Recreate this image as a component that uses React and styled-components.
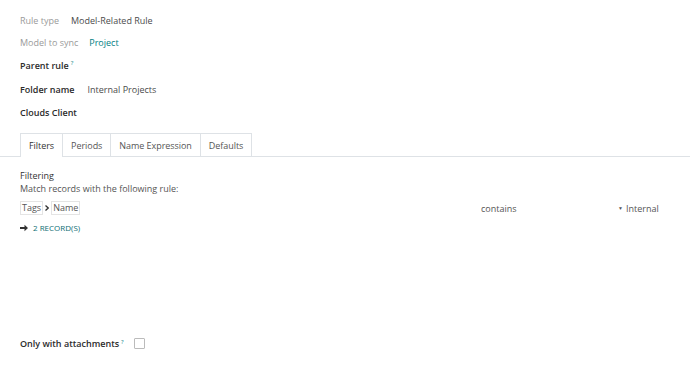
import React from "react";
import styled, { createGlobalStyle } from "styled-components";

const Global = createGlobalStyle`
  body {
    margin: 0;
    background: #fff;
    font-family: "Open Sans", "Noto Sans", sans-serif;
    font-size: 9px;
    color: #374151;
  }
`;

const Page = styled.div`
  width: 690px;
  height: 381px;
  display: flex;
  flex-direction: column;
  padding-top: 9px;
  box-sizing: border-box;
`;

const Fields = styled.div`
  display: flex;
  flex-direction: column;
  padding-left: 20px;
`;

const Row = styled.div`
  display: flex;
  align-items: center;
  height: ${p => p.$h || 23}px;
`;

const Label = styled.span`
  color: ${p => (p.$muted ? "#9a9a9a" : "#2b2b2b")};
  font-weight: ${p => (p.$muted ? 400 : 600)};
  margin-right: ${p => p.$gap || 0}px;
`;

const Value = styled.span`
  color: ${p => (p.$link ? "#017e84" : "#4b4b4b")};
`;

const Help = styled.sup`
  color: #017e84;
  font-size: 6px;
  font-weight: 400;
  margin-left: 2px;
  position: relative;
  top: -2px;
`;

const TabBar = styled.div`
  display: flex;
  margin-top: 9px;
  padding-left: 20px;
  border-bottom: 1px solid #dee2e6;
`;

const Tab = styled.div`
  display: flex;
  align-items: center;
  padding: 0 8px;
  border: 1px solid #dee2e6;
  border-bottom: none;
  margin-right: -1px;
  background: #fff;
  margin-bottom: ${p => (p.$active ? "-1px" : "0")};
  height: ${p => (p.$active ? "23px" : "22px")};
  color: ${p => (p.$active ? "#333" : "#555")};
  letter-spacing: -0.05px;
`;

const Panel = styled.div`
  padding: 12px 20px 0;
  display: flex;
  flex-direction: column;
  flex: 1;
`;

const Title = styled.div`
  color: #333;
  line-height: 14px;
`;

const Sub = styled.div`
  color: #555;
  line-height: 12px;
`;

const RuleRow = styled.div`
  display: grid;
  grid-template-columns: 461px 130px 1fr;
  align-items: center;
  margin-top: 6px;
  height: 14px;
  color: #555;
`;

const Path = styled.div`
  display: flex;
  align-items: center;
`;

const Chip = styled.span`
  border: 1px solid #e4e4e4;
  padding: 0 1px;
  line-height: 12px;
`;

const Caret = styled.svg`
  margin: 0 2px;
`;

const ValueCell = styled.div`
  display: flex;
  align-items: center;
  gap: 3px;
  margin-left: 7px;
`;

const Records = styled.div`
  display: flex;
  align-items: center;
  gap: 5px;
  margin-top: 7px;
  color: #0e6e73;
  font-size: 8px;
`;

const Bottom = styled.div`
  display: flex;
  align-items: center;
  padding: 0 20px 31px;
  font-weight: 600;
  color: #2b2b2b;
`;

const Box = styled.span`
  width: 9px;
  height: 9px;
  border: 1px solid #bbb;
  border-radius: 1px;
  margin-left: 10px;
`;

export default function App() {
  return (
    <Page>
      <Global />
      <Fields>
        <Row $h={22}><Label $muted $gap={12}>Rule type</Label><Value>Model-Related Rule</Value></Row>
        <Row $h={22}><Label $muted $gap={11}>Model to sync</Label><Value $link>Project</Value></Row>
        <Row $h={24}><Label>Parent rule</Label><Help>?</Help></Row>
        <Row $h={24}><Label $gap={13}>Folder name</Label><Value>Internal Projects</Value></Row>
        <Row $h={23}><Label>Clouds Client</Label></Row>
      </Fields>
      <TabBar>
        <Tab $active>Filters</Tab>
        <Tab>Periods</Tab>
        <Tab>Name Expression</Tab>
        <Tab>Defaults</Tab>
      </TabBar>
      <Panel>
        <Title>Filtering</Title>
        <Sub>Match records with the following rule:</Sub>
        <RuleRow>
          <Path>
            <Chip>Tags</Chip>
            <Caret width="4" height="6" viewBox="0 0 4 6"><path d="M0.5 0.5L3.2 3L0.5 5.5" stroke="#333" strokeWidth="1.3" fill="none" /></Caret>
            <Chip>Name</Chip>
          </Path>
          <span>contains</span>
          <ValueCell><span style={{ fontSize: 5 }}>▼</span>Internal</ValueCell>
        </RuleRow>
        <Records>
          <svg width="8" height="8" viewBox="0 0 8 8"><path d="M0 3h4.5V0.8L8 4 4.5 7.2V5H0z" fill="#333" /></svg>
          2 RECORD(S)
        </Records>
      </Panel>
      <Bottom>Only with attachments<Help>?</Help><Box /></Bottom>
    </Page>
  );
}
